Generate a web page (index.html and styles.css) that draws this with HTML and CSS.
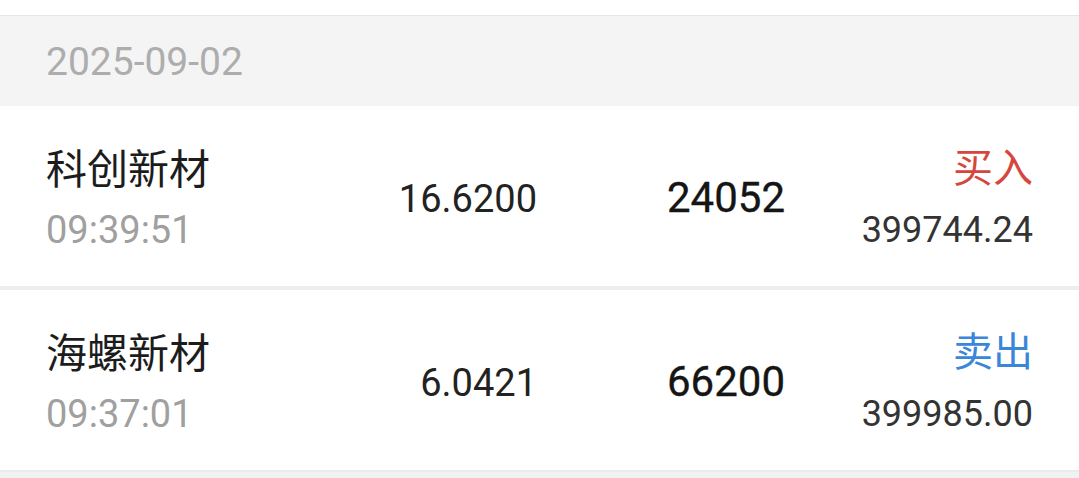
FILE: index.html
```html
<!DOCTYPE html>
<html lang="zh-CN">
<head>
<meta charset="utf-8">
<title>成交记录</title>
<link rel="stylesheet" href="styles.css">
</head>
<body>
<div class="page">
  <div class="date-bar">2025-09-02</div>
  <div class="row">
    <div class="name-col">
      <div class="name">科创新材</div>
      <div class="time">09:39:51</div>
    </div>
    <div class="price">16.6200</div>
    <div class="qty">24052</div>
    <div class="side-col">
      <div class="side buy">买入</div>
      <div class="amount">399744.24</div>
    </div>
  </div>
  <div class="sep"></div>
  <div class="row">
    <div class="name-col">
      <div class="name">海螺新材</div>
      <div class="time">09:37:01</div>
    </div>
    <div class="price">6.0421</div>
    <div class="qty">66200</div>
    <div class="side-col">
      <div class="side sell">卖出</div>
      <div class="amount">399985.00</div>
    </div>
  </div>
  <div class="tail"></div>
</div>
</body>
</html>
```

FILE: styles.css
```css
html, body {
  margin: 0;
  padding: 0;
  background: #ffffff;
}
.page {
  width: 1079px;
  height: 478px;
  overflow: hidden;
  padding-top: 15px;
  box-sizing: border-box;
  background: #ffffff;
  display: flex;
  flex-direction: column;
  font-family: Roboto, "Noto Sans CJK SC", sans-serif;
}
.date-bar {
  flex: none;
  height: 91px;
  border-top: 1px solid #e6e6e6;
  background: #f4f4f4;
  box-sizing: border-box;
  display: flex;
  align-items: center;
  padding-left: 46px;
  padding-top: 2px;
  font-size: 39px;
  color: #adadad;
}
.row {
  flex: none;
  height: 180px;
  background: #ffffff;
  display: grid;
  grid-template-columns: 260px 231px 248px 1fr;
  align-items: center;
  padding: 0 46px;
}
.sep {
  flex: none;
  height: 4px;
  background: #eeeeee;
}
.tail {
  flex: 1;
  background: #f1f1f1;
  border-top: 2px solid #ebebeb;
}
.name-col {
  display: flex;
  flex-direction: column;
}
.name {
  font-family: "Noto Sans CJK SC", sans-serif;
  font-size: 41px;
  line-height: 50px;
  margin-bottom: 17px;
  color: #1c1c1c;
}
.time {
  font-size: 38px;
  line-height: 44px;
  color: #a0a0a0;
}
.price {
  justify-self: end;
  font-size: 38px;
  color: #222222;
  padding-top: 6px;
}
.qty {
  justify-self: end;
  font-size: 42px;
  font-weight: 400;
  -webkit-text-stroke: 0.35px #151515;
  color: #151515;
  padding-top: 2px;
}
.side-col {
  justify-self: end;
  display: flex;
  flex-direction: column;
  align-items: flex-end;
}
.side {
  font-family: "Noto Sans CJK SC", sans-serif;
  font-size: 40px;
  line-height: 50px;
  margin-bottom: 18px;
}
.buy { color: #d5473d; }
.sell { color: #3a86d8; }
.amount {
  font-size: 36px;
  line-height: 44px;
  color: #333333;
}
```
